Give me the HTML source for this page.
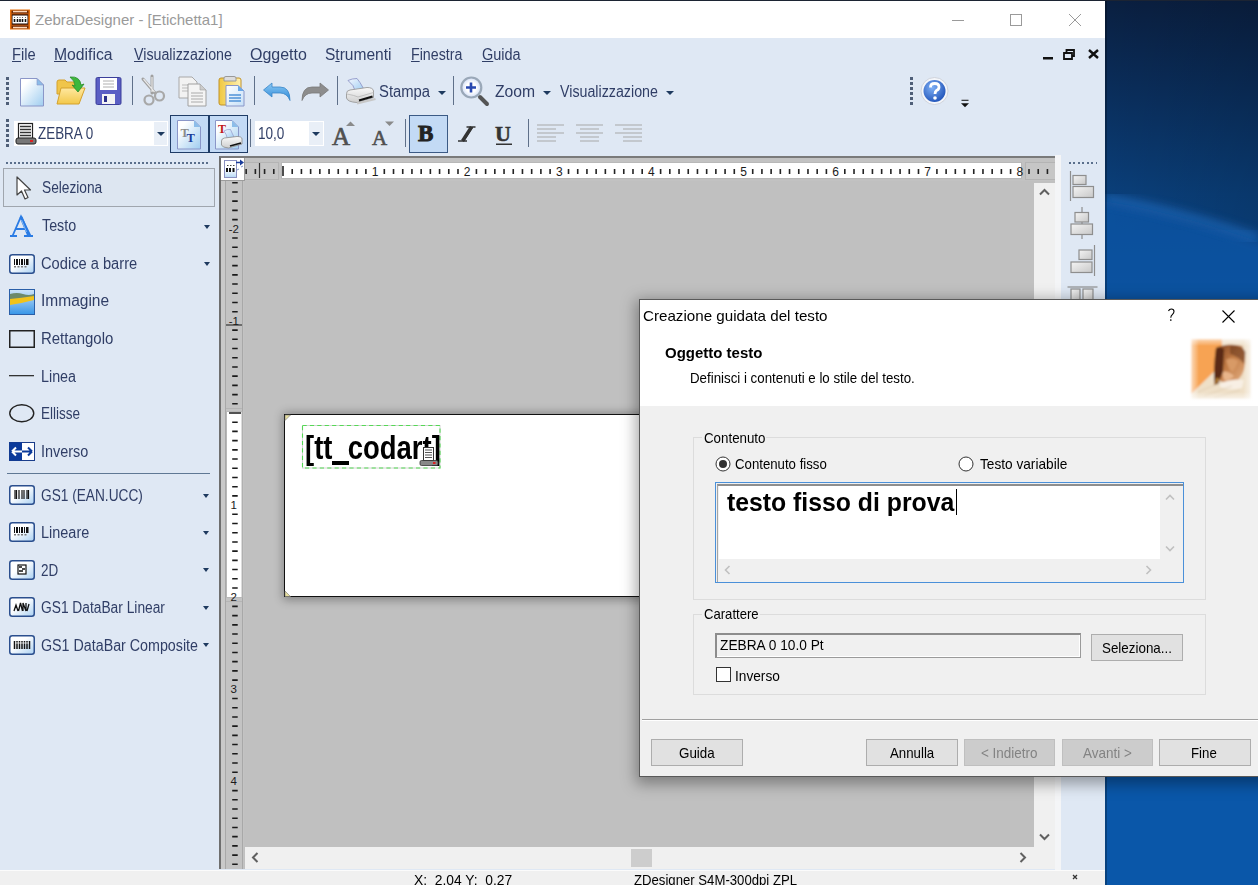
<!DOCTYPE html>
<html><head><meta charset="utf-8">
<style>
*{margin:0;padding:0;box-sizing:border-box}
html,body{width:1258px;height:885px;overflow:hidden;font-family:"Liberation Sans",sans-serif;font-size:12px;color:#000;background:#0a3d7a}
.a{position:absolute}
.t{position:absolute;white-space:nowrap;line-height:1}
svg{position:absolute;overflow:visible}
#desk{left:0;top:0;width:1258px;height:885px;background:#0a3d7a}
#win{left:0;top:0;width:1105px;height:885px;background:#dfe8f4;overflow:hidden}
#topline{left:0;top:0;width:1258px;height:1px;background:#1c2433}
#title{left:0;top:1px;width:1105px;height:37px;background:#fff}
.mn{color:#303e66;font-size:14px}
.mn u{text-decoration:underline;text-decoration-thickness:1px;text-underline-offset:1px}
.tb{color:#303e66;font-size:14px}
.grip{position:absolute;width:3px;background:repeating-linear-gradient(#4f5f78 0 2.6px,transparent 2.6px 5px)}
.sep{position:absolute;width:1px;background:#5f7089}
.lp{color:#303e66;font-size:14px}
.dl{font-size:14px;color:#000;transform:scaleX(0.955);transform-origin:0 0}
.dd{position:absolute;width:0;height:0;border-left:4px solid transparent;border-right:4px solid transparent;border-top:4px solid #1e3a5f}
</style></head><body>
<div class="a" id="desk"></div>
<svg class="a" style="left:1105px;top:0" width="153" height="885" viewBox="0 0 153 885">
  <defs>
    <linearGradient id="dv" x1="0" y1="0" x2="0" y2="1">
      <stop offset="0" stop-color="#0a1f40"/>
      <stop offset="0.1" stop-color="#0a2d5a"/>
      <stop offset="0.22" stop-color="#0a3f7a"/>
      <stop offset="0.4" stop-color="#0a4d94"/>
      <stop offset="0.7" stop-color="#0755a4"/>
      <stop offset="1" stop-color="#0757a6"/>
    </linearGradient>
    <linearGradient id="dh" x1="0" y1="0" x2="1" y2="0">
      <stop offset="0" stop-color="#000" stop-opacity="0"/>
      <stop offset="1" stop-color="#000" stop-opacity="0.12"/>
    </linearGradient>
    <filter id="blur"><feGaussianBlur stdDeviation="5"/></filter>
    <linearGradient id="dlow" x1="0" y1="0" x2="1" y2="0">
      <stop offset="0" stop-color="#0a64c0" stop-opacity="0"/>
      <stop offset="1" stop-color="#0a64c0" stop-opacity="0.5"/>
    </linearGradient>
  </defs>
  <rect width="153" height="885" fill="url(#dv)"/>
  <rect width="153" height="230" fill="url(#dh)"/>
  <path d="M-10 200Q60 208 163 245L163 895H-10Z" fill="#0a58ac" opacity="0.65" filter="url(#blur)"/>
  <path d="M0 198Q70 210 153 238" stroke="#2a78d0" stroke-width="8" fill="none" opacity="0.55" filter="url(#blur)"/>
  
  <rect x="0" y="0" width="2" height="885" fill="#000" opacity="0.25"/>
</svg>

<div class="a" id="win">
  <div class="a" id="title">
    <svg style="left:10px;top:8px" width="20" height="21" viewBox="0 0 20 21">
      <rect x="0" y="0.5" width="20" height="20" fill="#e8700c"/>
      <rect x="1.5" y="1.5" width="17" height="18" fill="#6e2a06"/>
      <rect x="3" y="1.8" width="14" height="1.5" fill="#ffd9bc"/>
      <rect x="3" y="17.8" width="14" height="1.5" fill="#ffd9bc"/>
      <rect x="1.5" y="4.5" width="17" height="1" fill="#e07020"/>
      <rect x="1.5" y="15.5" width="17" height="1" fill="#e07020"/>
      <rect x="2" y="5.5" width="16" height="10" fill="#1a0600"/>
      <rect x="2.5" y="6.5" width="15" height="8" fill="#fff"/>
      <path d="M4.5 8V9M7.5 8V9M10 8V9M12.5 8V9M15.5 8V9" stroke="#666" stroke-width="1"/>
      <path d="M4.5 10V13M7.5 10V13M10 10V13M12.5 10V13M15.5 10V13" stroke="#111" stroke-width="1.6"/>
    </svg>
    <div class="t" style="left:35px;top:11px;font-size:15px;color:#9a9a9a">ZebraDesigner - [Etichetta1]</div>
    <svg style="left:952px;top:18.6px" width="12" height="2"><rect width="12" height="1" fill="#9a9a9a"/></svg>
    <svg style="left:1010px;top:13px" width="12" height="12"><rect x="0.5" y="0.5" width="11" height="11" fill="none" stroke="#9a9a9a"/></svg>
    <svg style="left:1069px;top:13px" width="12" height="12"><path d="M0 0L12 12M12 0L0 12" stroke="#9a9a9a" stroke-width="1"/></svg>
  </div>

  <!-- menu -->
  <div class="t mn" style="left:12.08px;top:47.30px;font-size:16px;transform:scaleX(0.9167);transform-origin:0 0"><u>F</u>ile</div>
  <div class="t mn" style="left:54.02px;top:47.30px;font-size:16px;transform:scaleX(0.9831);transform-origin:0 0"><u>M</u>odifica</div>
  <div class="t mn" style="left:134.00px;top:47.30px;font-size:16px;transform:scaleX(0.8899);transform-origin:0 0"><u>V</u>isualizzazione</div>
  <div class="t mn" style="left:249.70px;top:47.30px;font-size:16px;transform:scaleX(0.9982);transform-origin:0 0"><u>O</u>ggetto</div>
  <div class="t mn" style="left:325.43px;top:47.30px;font-size:16px;transform:scaleX(0.9716);transform-origin:0 0">S<u>t</u>rumenti</div>
  <div class="t mn" style="left:410.51px;top:47.30px;font-size:16px;transform:scaleX(0.8877);transform-origin:0 0"><u>F</u>inestra</div>
  <div class="t mn" style="left:482.10px;top:47.30px;font-size:16px;transform:scaleX(0.9048);transform-origin:0 0"><u>G</u>uida</div>
  <!-- MDI buttons -->
  <svg style="left:1043px;top:57px" width="10" height="3"><rect width="10" height="2.5" fill="#111"/></svg>
  <svg style="left:1063px;top:49px" width="12" height="11" viewBox="0 0 12 11"><path d="M3.5 3V1h7.5v6H9M1 4h8v6H1z" fill="none" stroke="#111" stroke-width="1.8"/></svg>
  <svg style="left:1088px;top:49px" width="11" height="10" viewBox="0 0 11 10"><path d="M1 1L10 9M10 1L1 9" stroke="#111" stroke-width="2.4"/></svg>

  <!-- toolbar 1 -->
  <div class="grip" style="left:6px;top:76.5px;height:28px"></div>
  <svg style="left:20px;top:78px" width="25" height="29" viewBox="0 0 25 29">
    <defs><linearGradient id="gdoc" x1="0" y1="0" x2="1" y2="1"><stop offset="0.2" stop-color="#fff"/><stop offset="1" stop-color="#9fcdf0"/></linearGradient></defs>
    <path d="M0.5 0.5H17L23.5 7V28H0.5Z" fill="url(#gdoc)" stroke="#8a96c8"/>
    <path d="M17 0.5V7H23.5Z" fill="#8cbde9" stroke="#8a96c8" stroke-width="0.6"/>
  </svg>
  <svg style="left:56px;top:76px" width="30" height="30" viewBox="0 0 30 30">
    <defs><linearGradient id="gfold" x1="0" y1="0" x2="0" y2="1"><stop offset="0" stop-color="#ffe8a0"/><stop offset="1" stop-color="#f2c84a"/></linearGradient></defs>
    <path d="M1 6Q1 4 3 4H9L11 6H20V18H1Z" fill="#f0c54a" stroke="#d4a12c"/>
    <path d="M1 28L5 12H29L23 28Z" fill="url(#gfold)" stroke="#d4a12c"/>
    <path d="M14 1Q24 0 25 9L28 8L22 16L16 9L19 10Q19 5 14 1Z" fill="#3cb83c" stroke="#2a8a2a" stroke-width="0.8"/>
  </svg>
  <svg style="left:95px;top:77px" width="27" height="28" viewBox="0 0 27 28">
    <path d="M1 2Q1 0.5 2.5 0.5H24.5Q26 0.5 26 2V26Q26 27.5 24.5 27.5H2.5Q1 27.5 1 26Z" fill="#5b5fc4" stroke="#3c3f9a"/>
    <rect x="5" y="1" width="17" height="12" fill="#fff"/>
    <path d="M8 4H19M8 7H19M8 10H19" stroke="#b0b0b0" stroke-width="1"/>
    <rect x="7" y="17" width="13" height="10" fill="#f4f4f4"/>
    <rect x="9" y="19" width="3" height="6" fill="#2b2f8a"/>
  </svg>
  <div class="sep" style="left:132px;top:76px;height:29px"></div>
  <svg style="left:142px;top:76px" width="24" height="30" viewBox="0 0 24 30">
    <path d="M1 3L13 17M10 0L10 17" stroke="#a0a0a0" stroke-width="3" stroke-linecap="round"/>
    <path d="M1.5 3L12.5 16M10 1L10 16" stroke="#e8e8e8" stroke-width="1.2"/>
    <circle cx="7" cy="24" r="4.5" fill="none" stroke="#a8a8a8" stroke-width="2.2"/>
    <circle cx="17.5" cy="20" r="4.5" fill="none" stroke="#a8a8a8" stroke-width="2.2"/>
  </svg>
  <svg style="left:178px;top:76px" width="29" height="31" viewBox="0 0 29 31">
    <path d="M1 1H14L19 6V22H1Z" fill="#f2f2f2" stroke="#a8a8a8"/>
    <path d="M4 9H11M4 12H11M4 15H11" stroke="#bbb"/>
    <path d="M10 8H22L28 14V30H10Z" fill="#f4f4f4" stroke="#a0a0a0"/>
    <path d="M22 8V14H28" fill="#ccc" stroke="#a0a0a0" stroke-width="0.6"/>
    <path d="M13 17H25M13 20H25M13 23H25M13 26H25" stroke="#aaa" stroke-width="1.2"/>
  </svg>
  <svg style="left:218px;top:76px" width="27" height="31" viewBox="0 0 27 31">
    <defs><linearGradient id="gclip" x1="0" y1="0" x2="1" y2="0"><stop offset="0" stop-color="#f0c840"/><stop offset="1" stop-color="#fff0b0"/></linearGradient>
    <linearGradient id="gpg" x1="0" y1="0" x2="1" y2="1"><stop offset="0" stop-color="#fff"/><stop offset="1" stop-color="#c6e0f8"/></linearGradient></defs>
    <rect x="1" y="2" width="22" height="27" rx="2" fill="url(#gclip)" stroke="#c0922a"/>
    <path d="M6 5V2Q6 0.5 8 0.5H16Q18 0.5 18 2V5Z" fill="#ddd" stroke="#999"/>
    <path d="M8 9.5H20L26 15V30H8Z" fill="url(#gpg)" stroke="#8a96c8"/>
    <path d="M20 9.5V15H26Z" fill="#6aa8e8"/>
    <path d="M11 19H23M11 22H23M11 25H23" stroke="#4f92d8" stroke-width="1.3"/>
  </svg>
  <div class="sep" style="left:254px;top:76px;height:29px"></div>
  <svg style="left:263px;top:82px" width="28" height="19" viewBox="0 0 28 19">
    <defs><linearGradient id="gundo" x1="0" y1="0" x2="0" y2="1"><stop offset="0" stop-color="#8ccaf5"/><stop offset="1" stop-color="#2a86d6"/></linearGradient></defs>
    <path d="M0.5 8L9 1V5H17Q27 5 27 18.5Q24 11 17 11H9V15Z" fill="url(#gundo)" stroke="#3a86c8" stroke-width="0.8"/>
  </svg>
  <svg style="left:301px;top:82px" width="28" height="19" viewBox="0 0 28 19">
    <path d="M27.5 8L19 1V5H11Q1 5 1 18.5Q4 11 11 11H19V15Z" fill="#8d8d8d" stroke="#7a7a7a" stroke-width="0.8"/>
  </svg>
  <div class="sep" style="left:337px;top:76px;height:29px"></div>
  <svg style="left:345px;top:76px" width="31" height="29" viewBox="0 0 31 29">
    <defs><linearGradient id="gpap2" x1="0" y1="0" x2="1" y2="1"><stop offset="0" stop-color="#f4f8ff"/><stop offset="1" stop-color="#9ccbf2"/></linearGradient>
    <linearGradient id="gprb" x1="0" y1="0" x2="0" y2="1"><stop offset="0" stop-color="#fafafa"/><stop offset="1" stop-color="#cfcfcf"/></linearGradient></defs>
    <path d="M3 4.5Q7 2.5 12 2.5Q15 6 18.5 12.5L10.5 15.5Q9 9 3 4.5Z" fill="url(#gpap2)" stroke="#9096c8" stroke-width="0.9"/>
    <path d="M1.5 17.5Q1.5 14.5 5 14L22 11.5Q28 11.5 28.5 15V21.5L12 26.5Q2.5 26 1.5 22Z" fill="url(#gprb)" stroke="#9a9a9a" stroke-width="0.9"/>
    <path d="M2 18Q10 19.5 13 21L28.5 16.5" fill="none" stroke="#b8b8b8" stroke-width="0.8"/>
    <path d="M14 24.5L27.5 20.5" stroke="#111" stroke-width="2.2"/>
    <path d="M12 27.5L30.5 23" stroke="#c8c8c8" stroke-width="2"/>
  </svg>
  <div class="t tb" style="left:379.07px;top:83.60px;font-size:16px;transform:scaleX(0.9259);transform-origin:0 0">Stampa</div>
  <div class="dd" style="left:438px;top:91px"></div>
  <div class="sep" style="left:453px;top:76px;height:29px"></div>
  <svg style="left:459px;top:76px" width="31" height="31" viewBox="0 0 31 31">
    <defs><radialGradient id="glens"><stop offset="0.5" stop-color="#fff"/><stop offset="1" stop-color="#cfdcf5"/></radialGradient></defs>
    <path d="M21 21L28 28" stroke="#555" stroke-width="4" stroke-linecap="round"/>
    <circle cx="12.3" cy="11.5" r="10" fill="url(#glens)" stroke="#9aa8b8" stroke-width="2.2"/>
    <path d="M7 11.5H17M12 6.5V16.5" stroke="#2848b0" stroke-width="2.6"/>
  </svg>
  <div class="t tb" style="left:494.80px;top:83.60px;font-size:16px;transform:scaleX(0.9800);transform-origin:0 0">Zoom</div>
  <div class="dd" style="left:543px;top:91px"></div>
  <div class="t tb" style="left:560.00px;top:83.60px;font-size:16px;transform:scaleX(0.8899);transform-origin:0 0">Visualizzazione</div>
  <div class="dd" style="left:666px;top:91px"></div>
  <div class="grip" style="left:910px;top:76.5px;height:28px"></div>
  <svg style="left:920px;top:77px" width="30" height="29" viewBox="0 0 30 29">
    <defs><radialGradient id="ghelp" cx="0.4" cy="0.35" r="0.7"><stop offset="0" stop-color="#7fb0f5"/><stop offset="1" stop-color="#1f52b8"/></radialGradient></defs>
    <circle cx="14.5" cy="14" r="13.5" fill="#f4f6fa" stroke="#c8ccd4" stroke-width="0.8"/>
    <circle cx="14.5" cy="14" r="11" fill="url(#ghelp)"/>
    <path d="M10.5 10.5Q10.5 6.5 14.8 6.5Q19 6.5 19 10Q19 12.5 16.5 13.5Q15 14.5 15 17" fill="none" stroke="#fff" stroke-width="2.8"/>
    <circle cx="15" cy="21" r="1.8" fill="#fff"/>
  </svg>
  <svg style="left:961px;top:99px" width="8" height="9" viewBox="0 0 8 9"><path d="M0.5 1.3H7.5" stroke="#222" stroke-width="1.1"/><path d="M0 4.2H8L4 8.3Z" fill="#111"/></svg>

  <!-- toolbar 2 -->
  <div class="grip" style="left:6px;top:118.5px;height:28px"></div>
  <div class="a" style="left:14px;top:121px;width:154px;height:25px;background:#fff"></div>
  <div class="a" style="left:154px;top:122px;width:13px;height:23px;background:#e9eff7"></div>
  <div class="dd" style="left:157px;top:132px"></div>
  <svg style="left:15px;top:123px" width="22" height="22" viewBox="0 0 22 22">
    <rect x="3.5" y="0.5" width="14" height="15" fill="#fff" stroke="#222" stroke-width="1.2"/>
    <path d="M5 3.5H16M5 6.5H16M5 9.5H16M5 12.5H16" stroke="#333" stroke-width="1.3"/>
    <path d="M1 17Q1 15 3 15H19Q21 15 21 17V19Q21 21 19 21H3Q1 21 1 19Z" fill="#777" stroke="#222" stroke-width="1"/>
    <rect x="15" y="17" width="3" height="2" fill="#d22"/>
  </svg>
  <div class="t tb" style="left:37.80px;top:125.90px;font-size:16px;transform:scaleX(0.8385);transform-origin:0 0">ZEBRA 0</div>
  <div class="a" style="left:170px;top:115px;width:78px;height:38px;background:#c3daf5;border:1.5px solid #1f3c66"></div>
  <div class="a" style="left:207.5px;top:115px;width:2px;height:38px;background:#1f3c66"></div>
  <svg style="left:177px;top:120px" width="25" height="30" viewBox="0 0 25 30">
    <path d="M0.5 0.5H17L23.5 7V29H0.5Z" fill="url(#gdoc)" stroke="#8a96c8"/>
    <path d="M17 0.5V7H23.5Z" fill="#8cbde9"/>
    <text x="3.5" y="17" font-family="Liberation Serif" font-size="12.5" font-weight="bold" fill="#8a8a8a">T</text>
    <text x="9.5" y="21.5" font-family="Liberation Serif" font-size="12.5" font-weight="bold" fill="#1a3c9a">T</text>
  </svg>
  <svg style="left:215px;top:120px" width="30" height="30" viewBox="0 0 30 30">
    <path d="M0.5 0.5H17L23.5 7V29H0.5Z" fill="url(#gdoc)" stroke="#8a96c8"/>
    <path d="M17 0.5V7H23.5Z" fill="#8cbde9"/>
    <text x="3" y="13" font-family="Liberation Serif" font-size="12" font-weight="bold" fill="#c01818">T</text>
    <path d="M9 11Q12 9 15.5 9.5Q17 13 19 17L12.5 19Q11.5 14 9 11Z" fill="url(#gpap2)" stroke="#9096c8" stroke-width="0.7"/>
    <path d="M6.5 21Q6.5 18.5 9.5 18L22 16.5Q27 16.5 27 19V24L13.5 28Q7 27.5 6.5 25Z" fill="url(#gprb)" stroke="#8a8a8a" stroke-width="0.8"/>
    <path d="M15 26L26 23" stroke="#111" stroke-width="1.8"/>
  </svg>
  <div class="sep" style="left:250px;top:119px;height:28px"></div>
  <div class="a" style="left:255px;top:121px;width:69px;height:25px;background:#fff"></div>
  <div class="a" style="left:309px;top:122px;width:14px;height:23px;background:#e9eff7"></div>
  <div class="dd" style="left:312px;top:132px"></div>
  <div class="t tb" style="left:257.75px;top:125.90px;font-size:16px;transform:scaleX(0.8467);transform-origin:0 0">10,0</div>
  <svg style="left:332px;top:121px" width="25" height="25" viewBox="0 0 25 25">
    <text x="0" y="24" font-family="Liberation Serif" font-size="25" fill="#505050" stroke="#505050" stroke-width="0.7">A</text>
    <path d="M14 5L18.5 0.5L23 5Z" fill="#8a8a8a"/>
  </svg>
  <svg style="left:372px;top:121px" width="22" height="25" viewBox="0 0 22 25">
    <text x="0" y="24" font-family="Liberation Serif" font-size="21" fill="#505050" stroke="#505050" stroke-width="0.6">A</text>
    <path d="M13 0.5H22L17.5 5Z" fill="#8a8a8a"/>
  </svg>
  <div class="sep" style="left:405px;top:119px;height:28px"></div>
  <div class="a" style="left:409px;top:115px;width:39px;height:38px;background:#c3daf5;border:1px solid #3b5a85"></div>
  <svg style="left:418px;top:125px" width="20" height="18" viewBox="0 0 20 18">
    <text x="0" y="16.3" font-family="Liberation Serif" font-size="23" font-weight="bold" fill="#222" stroke="#222" stroke-width="0.9">B</text>
  </svg>
  <svg style="left:457px;top:125px" width="20" height="18" viewBox="0 0 20 18">
    <path d="M9.5 2H18.5M1 16H10M15.5 2L6.5 16" fill="none" stroke="#333" stroke-width="1.6"/><path d="M14.5 2L5.5 16" stroke="#333" stroke-width="3.4"/>
  </svg>
  <svg style="left:495px;top:124px" width="20" height="22" viewBox="0 0 20 22">
    <text x="0" y="16.5" font-family="Liberation Serif" font-size="22" font-weight="bold" fill="#333" stroke="#333" stroke-width="0.5">U</text>
    <rect x="1" y="19.5" width="16" height="1.5" fill="#333"/>
  </svg>
  <div class="sep" style="left:528px;top:119px;height:28px"></div>
  <svg style="left:537px;top:124px" width="106" height="20" viewBox="0 0 106 20">
    <g stroke="#a8a8a8" stroke-width="1.1">
      <path d="M0 1H27M0 5H19M0 9H27M0 13H19M0 17H19"/>
      <path d="M39 1H66M43 5H62M39 9H66M43 13H62M43 17H62"/>
      <path d="M78 1H105M86 5H105M78 9H105M86 13H105M86 17H105"/>
    </g>
  </svg>

  <!-- left panel -->
  <svg style="left:0;top:0" width="0" height="0"><defs><linearGradient id="gbc" x1="0" y1="0" x2="1" y2="1"><stop offset="0.4" stop-color="#fff"/><stop offset="1" stop-color="#a9d0f2"/></linearGradient></defs></svg>
  <div class="a" style="left:6px;top:162px;width:204px;height:2px;background:repeating-linear-gradient(90deg,#5a6f8c 0 2px,transparent 2px 4px)"></div>
  <div class="a" style="left:3px;top:168px;width:212px;height:39px;border:1px solid #a0a6ae;background:#dde6f1"></div>
  <svg style="left:16px;top:176px" width="16" height="25" viewBox="0 0 16 25">
    <path d="M1 1V19L5.5 15L9 23L12 21.5L8.5 14H14.5Z" fill="#fff" stroke="#444" stroke-width="1.2" stroke-linejoin="round"/>
  </svg>
  <div class="t lp" style="left:42.14px;top:179.60px;font-size:16px;transform:scaleX(0.8571);transform-origin:0 0">Seleziona</div>
  <svg style="left:9px;top:215px" width="25" height="22" viewBox="0 0 25 22">
    <path d="M1 21H8M15 21H24M3.5 21L12 1.5L21.5 21M7 14H17" fill="none" stroke="#2a7be4" stroke-width="1.8"/>
    <path d="M12 2L19.5 20" stroke="#2a7be4" stroke-width="3"/>
    <path d="M12.5 5L17.5 17" stroke="#9cc8f4" stroke-width="0.8"/>
  </svg>
  <div class="t lp" style="left:42.00px;top:218.00px;font-size:16px;transform:scaleX(0.8947);transform-origin:0 0">Testo</div>
  <div class="dd" style="left:203.5px;top:224.5px;border-left-width:3.5px;border-right-width:3.5px"></div>
  <svg style="left:9px;top:254px" width="26" height="20" viewBox="0 0 26 20">
    <defs></defs>
    <rect x="0.75" y="0.75" width="24.5" height="18.5" rx="2.5" fill="url(#gbc)" stroke="#2b4f8e" stroke-width="1.5"/>
    <g fill="#111"><rect x="5" y="5" width="1" height="6"/><rect x="7" y="5" width="2" height="6"/><rect x="10" y="5" width="1" height="6"/><rect x="12" y="5" width="2" height="6"/><rect x="15" y="5" width="1" height="6"/><rect x="17" y="5" width="2.5" height="6"/></g><g fill="#777"><rect x="5" y="12" width="2" height="1.5"/><rect x="8.5" y="12" width="2" height="1.5"/><rect x="12" y="12" width="2" height="1.5"/><rect x="15.5" y="12" width="2" height="1.5"/></g>
  </svg>

  <div class="t lp" style="left:40.98px;top:255.80px;font-size:16px;transform:scaleX(0.9165);transform-origin:0 0">Codice a barre</div>
  <div class="dd" style="left:203.5px;top:261.5px;border-left-width:3.5px;border-right-width:3.5px"></div>
  <svg style="left:9px;top:289px" width="26" height="26" viewBox="0 0 26 26">
    <defs><linearGradient id="gimg" x1="0" y1="0" x2="0" y2="1"><stop offset="0" stop-color="#cfe4f7"/><stop offset="1" stop-color="#3796e8"/></linearGradient></defs>
    <rect x="0.5" y="0.5" width="25" height="25" fill="url(#gimg)" stroke="#2a5fa8"/>
    <path d="M1 5Q8 3 14 5Q20 7 25 5V8Q16 11 1 13Z" fill="#6d8a6a"/>
    <path d="M1 10Q12 9 25 7V11Q14 14 1 16Z" fill="#f2c31a"/>
  </svg>
  <div class="t lp" style="left:40.93px;top:293.40px;font-size:16px;transform:scaleX(0.9696);transform-origin:0 0">Immagine</div>
  <svg style="left:9px;top:330px" width="26" height="18" viewBox="0 0 26 18"><rect x="0.75" y="0.75" width="24.5" height="16.5" fill="none" stroke="#222" stroke-width="1.5"/></svg>
  <div class="t lp" style="left:41.07px;top:331.00px;font-size:16px;transform:scaleX(0.9342);transform-origin:0 0">Rettangolo</div>
  <svg style="left:9px;top:375px" width="26" height="2"><rect width="25" height="1.3" fill="#333"/></svg>
  <div class="t lp" style="left:41.11px;top:368.60px;font-size:16px;transform:scaleX(0.8947);transform-origin:0 0">Linea</div>
  <svg style="left:9px;top:404px" width="26" height="19" viewBox="0 0 26 19"><ellipse cx="12.75" cy="9.25" rx="12" ry="8.5" fill="none" stroke="#222" stroke-width="1.4"/></svg>
  <div class="t lp" style="left:41.16px;top:406.20px;font-size:16px;transform:scaleX(0.8444);transform-origin:0 0">Ellisse</div>
  <svg style="left:9px;top:442px" width="26" height="19" viewBox="0 0 26 19">
    <rect x="0.5" y="0.5" width="25" height="18" fill="#fff" stroke="#1a3d8a"/>
    <rect x="0.5" y="0.5" width="12.5" height="18" fill="#0b3a9a"/>
    <path d="M3 9.5H23M3 9.5L7 5.5M3 9.5L7 13.5M23 9.5L19 5.5M23 9.5L19 13.5" stroke="#fff" stroke-width="2"/>
    <path d="M13 9.5H23M23 9.5L19 5.5M23 9.5L19 13.5" stroke="#0b3a9a" stroke-width="2"/>
  </svg>
  <div class="t lp" style="left:41.10px;top:443.80px;font-size:16px;transform:scaleX(0.9020);transform-origin:0 0">Inverso</div>
  <div class="a" style="left:7px;top:473px;width:203px;height:1px;background:#5f7894"></div>
  <svg style="left:9px;top:485px" width="26" height="20" viewBox="0 0 26 20">
    <defs></defs>
    <rect x="0.75" y="0.75" width="24.5" height="18.5" rx="2.5" fill="url(#gbc)" stroke="#2b4f8e" stroke-width="1.5"/>
    <path d="M6 5V14M7.5 5V14M10 5V14M13 5V14M15 5V14M18 5V14M19.5 5V14" stroke="#111" stroke-width="1.2"/>
  </svg>

  <div class="t lp" style="left:41.15px;top:487.50px;font-size:16px;transform:scaleX(0.8547);transform-origin:0 0">GS1 (EAN.UCC)</div>
  <div class="dd" style="left:202.5px;top:493.5px;border-left-width:3.5px;border-right-width:3.5px"></div>
  <svg style="left:9px;top:522px" width="26" height="20" viewBox="0 0 26 20">
    <defs></defs>
    <rect x="0.75" y="0.75" width="24.5" height="18.5" rx="2.5" fill="url(#gbc)" stroke="#2b4f8e" stroke-width="1.5"/>
    <g fill="#111"><rect x="5" y="5" width="1" height="6"/><rect x="7" y="5" width="2" height="6"/><rect x="10" y="5" width="1" height="6"/><rect x="12" y="5" width="2" height="6"/><rect x="15" y="5" width="1" height="6"/><rect x="17" y="5" width="2.5" height="6"/></g><g fill="#777"><rect x="5" y="12" width="2" height="1.5"/><rect x="8.5" y="12" width="2" height="1.5"/><rect x="12" y="12" width="2" height="1.5"/><rect x="15.5" y="12" width="2" height="1.5"/></g>
  </svg>

  <div class="t lp" style="left:41.10px;top:525.00px;font-size:16px;transform:scaleX(0.9038);transform-origin:0 0">Lineare</div>
  <div class="dd" style="left:202.5px;top:530.5px;border-left-width:3.5px;border-right-width:3.5px"></div>
  <svg style="left:9px;top:560px" width="26" height="20" viewBox="0 0 26 20">
    <defs></defs>
    <rect x="0.75" y="0.75" width="24.5" height="18.5" rx="2.5" fill="url(#gbc)" stroke="#2b4f8e" stroke-width="1.5"/>
    <rect x="9" y="5" width="8" height="9" fill="#fff" stroke="#111" stroke-width="1.2"/><path d="M10 7H13M13 9H16M10 11H14" stroke="#111" stroke-width="1.4"/>
  </svg>

  <div class="t lp" style="left:41.16px;top:562.70px;font-size:16px;transform:scaleX(0.8421);transform-origin:0 0">2D</div>
  <div class="dd" style="left:202.5px;top:567.5px;border-left-width:3.5px;border-right-width:3.5px"></div>
  <svg style="left:9px;top:597px" width="26" height="20" viewBox="0 0 26 20">
    <defs></defs>
    <rect x="0.75" y="0.75" width="24.5" height="18.5" rx="2.5" fill="url(#gbc)" stroke="#2b4f8e" stroke-width="1.5"/>
    <path d="M5 14L7 8L9 14M9.5 14L11.5 6L13.5 14M14 14V6L17 14V6M18 14L20 7" fill="none" stroke="#111" stroke-width="1.3"/>
  </svg>

  <div class="t lp" style="left:41.14px;top:600.30px;font-size:16px;transform:scaleX(0.8601);transform-origin:0 0">GS1 DataBar Linear</div>
  <div class="dd" style="left:202.5px;top:605.5px;border-left-width:3.5px;border-right-width:3.5px"></div>
  <svg style="left:9px;top:635px" width="26" height="20" viewBox="0 0 26 20">
    <defs></defs>
    <rect x="0.75" y="0.75" width="24.5" height="18.5" rx="2.5" fill="url(#gbc)" stroke="#2b4f8e" stroke-width="1.5"/>
    <path d="M5.5 6V14M8 6V14M10.5 6V14M13 6V14M15.5 6V14M18 6V14M20.5 6V14" stroke="#111" stroke-width="1.5"/><path d="M6 8H20" stroke="#fff" stroke-width="0.8"/>
  </svg>

  <div class="t lp" style="left:41.11px;top:638.00px;font-size:16px;transform:scaleX(0.8914);transform-origin:0 0">GS1 DataBar Composite</div>
  <div class="dd" style="left:202.5px;top:642.5px;border-left-width:3.5px;border-right-width:3.5px"></div>

  <!-- canvas -->
  <div class="a" style="left:219px;top:156px;width:836px;height:713px;background:#c0c0c0;border-left:2px solid #6e6e6e;border-top:2px solid #7a7a7a"></div>
  <svg id="hruler" style="left:244px;top:158px" width="811" height="23" viewBox="0 0 811 23">
<rect x="0" y="0" width="811" height="23" fill="#c2c2c2"/>
<rect x="0.5" y="4.5" width="34" height="17" fill="#c6c6c6" stroke="#b4b4b4"/>
<rect x="37.5" y="4.5" width="740" height="16" fill="#fff" stroke="#b8b8b8"/>
<rect x="781.5" y="4.5" width="30" height="17" fill="#c6c6c6" stroke="#b4b4b4"/>
<path d="M2.16 11V16 M11.37 11V16 M20.58 11V16 M29.79 11V16 M39.00 8V18 M48.21 11V16 M57.42 11V16 M66.63 11V16 M75.84 11V16 M85.05 11V16 M94.26 11V16 M103.47 11V16 M112.68 11V16 M121.89 11V16 M140.31 11V16 M149.52 11V16 M158.73 11V16 M167.94 11V16 M177.15 11V16 M186.36 11V16 M195.57 11V16 M204.78 11V16 M213.99 11V16 M232.41 11V16 M241.62 11V16 M250.83 11V16 M260.04 11V16 M269.25 11V16 M278.46 11V16 M287.67 11V16 M296.88 11V16 M306.09 11V16 M324.51 11V16 M333.72 11V16 M342.93 11V16 M352.14 11V16 M361.35 11V16 M370.56 11V16 M379.77 11V16 M388.98 11V16 M398.19 11V16 M416.61 11V16 M425.82 11V16 M435.03 11V16 M444.24 11V16 M453.45 11V16 M462.66 11V16 M471.87 11V16 M481.08 11V16 M490.29 11V16 M508.71 11V16 M517.92 11V16 M527.13 11V16 M536.34 11V16 M545.55 11V16 M554.76 11V16 M563.97 11V16 M573.18 11V16 M582.39 11V16 M600.81 11V16 M610.02 11V16 M619.23 11V16 M628.44 11V16 M637.65 11V16 M646.86 11V16 M656.07 11V16 M665.28 11V16 M674.49 11V16 M692.91 11V16 M702.12 11V16 M711.33 11V16 M720.54 11V16 M729.75 11V16 M738.96 11V16 M748.17 11V16 M757.38 11V16 M766.59 11V16 M785.01 11V16 M794.22 11V16 M803.43 11V16" stroke="#222" stroke-width="1.6"/>
<path d="M15.5 5V20" stroke="#333" stroke-width="1.2"/>
<text x="131.10" y="17.5" font-family="Liberation Sans" font-size="12" text-anchor="middle" fill="#1a1a1a">1</text>
<text x="223.20" y="17.5" font-family="Liberation Sans" font-size="12" text-anchor="middle" fill="#1a1a1a">2</text>
<text x="315.30" y="17.5" font-family="Liberation Sans" font-size="12" text-anchor="middle" fill="#1a1a1a">3</text>
<text x="407.40" y="17.5" font-family="Liberation Sans" font-size="12" text-anchor="middle" fill="#1a1a1a">4</text>
<text x="499.50" y="17.5" font-family="Liberation Sans" font-size="12" text-anchor="middle" fill="#1a1a1a">5</text>
<text x="591.60" y="17.5" font-family="Liberation Sans" font-size="12" text-anchor="middle" fill="#1a1a1a">6</text>
<text x="683.70" y="17.5" font-family="Liberation Sans" font-size="12" text-anchor="middle" fill="#1a1a1a">7</text>
<text x="775.80" y="17.5" font-family="Liberation Sans" font-size="12" text-anchor="middle" fill="#1a1a1a">8</text>
</svg>
  <svg id="vruler" style="left:221px;top:181px" width="23" height="688" viewBox="0 0 23 688">
<rect x="0" y="0" width="23" height="688" fill="#c3c3c3"/>
<rect x="0" y="0" width="4.5" height="688" fill="#c9c9c9"/>
<path d="M4.5 0V688" stroke="#a8a8a8" stroke-width="1"/>
<path d="M21.5 0V688" stroke="#a8a8a8" stroke-width="1"/>
<rect x="5.5" y="230.5" width="15.5" height="186" fill="#fff" stroke="#b8b8b8"/>
<path d="M5 227.5H21M5 420.5H21" stroke="#b4b4b4" stroke-width="1"/>
<path d="M11.2 1.75H16.7 M11.2 10.96H16.7 M11.2 20.17H16.7 M11.2 29.38H16.7 M11.2 38.59H16.7 M11.2 57.01H16.7 M11.2 66.22H16.7 M11.2 75.43H16.7 M11.2 84.64H16.7 M11.2 93.85H16.7 M11.2 103.06H16.7 M11.2 112.27H16.7 M11.2 121.48H16.7 M11.2 130.69H16.7 M11.2 149.11H16.7 M11.2 158.32H16.7 M11.2 167.53H16.7 M11.2 176.74H16.7 M11.2 185.95H16.7 M11.2 195.16H16.7 M11.2 204.37H16.7 M11.2 213.58H16.7 M11.2 222.79H16.7 M8 232.00H20 M11.2 241.21H16.7 M11.2 250.42H16.7 M11.2 259.63H16.7 M11.2 268.84H16.7 M11.2 278.05H16.7 M11.2 287.26H16.7 M11.2 296.47H16.7 M11.2 305.68H16.7 M11.2 314.89H16.7 M11.2 333.31H16.7 M11.2 342.52H16.7 M11.2 351.73H16.7 M11.2 360.94H16.7 M11.2 370.15H16.7 M11.2 379.36H16.7 M11.2 388.57H16.7 M11.2 397.78H16.7 M11.2 406.99H16.7 M11.2 425.41H16.7 M11.2 434.62H16.7 M11.2 443.83H16.7 M11.2 453.04H16.7 M11.2 462.25H16.7 M11.2 471.46H16.7 M11.2 480.67H16.7 M11.2 489.88H16.7 M11.2 499.09H16.7 M11.2 517.51H16.7 M11.2 526.72H16.7 M11.2 535.93H16.7 M11.2 545.14H16.7 M11.2 554.35H16.7 M11.2 563.56H16.7 M11.2 572.77H16.7 M11.2 581.98H16.7 M11.2 591.19H16.7 M11.2 609.61H16.7 M11.2 618.82H16.7 M11.2 628.03H16.7 M11.2 637.24H16.7 M11.2 646.45H16.7 M11.2 655.66H16.7 M11.2 664.87H16.7 M11.2 674.08H16.7 M11.2 683.29H16.7" stroke="#1a1a1a" stroke-width="1.6"/>
<path d="M5 144H21" stroke="#333" stroke-width="1.2"/>
<text x="12.8" y="51.80" font-family="Liberation Sans" font-size="11.5" text-anchor="middle" fill="#1a1a1a">-2</text>
<text x="12.8" y="143.90" font-family="Liberation Sans" font-size="11.5" text-anchor="middle" fill="#1a1a1a">-1</text>
<text x="12.8" y="328.10" font-family="Liberation Sans" font-size="11.5" text-anchor="middle" fill="#1a1a1a">1</text>
<text x="12.8" y="420.20" font-family="Liberation Sans" font-size="11.5" text-anchor="middle" fill="#1a1a1a">2</text>
<text x="12.8" y="512.30" font-family="Liberation Sans" font-size="11.5" text-anchor="middle" fill="#1a1a1a">3</text>
<text x="12.8" y="604.40" font-family="Liberation Sans" font-size="11.5" text-anchor="middle" fill="#1a1a1a">4</text>
</svg>
  <div class="a" style="left:221px;top:158px;width:23.5px;height:23px;background:#fff;border-right:1px solid #9c9c9c;border-bottom:1px solid #9c9c9c"></div>
  <svg style="left:223px;top:159px" width="22" height="21" viewBox="0 0 22 21">
    <defs><linearGradient id="gcorn" x1="0" y1="0" x2="0" y2="1"><stop offset="0.5" stop-color="#fff"/><stop offset="1" stop-color="#b5d8f5"/></linearGradient></defs>
    <rect x="1.5" y="1.5" width="12" height="17" fill="url(#gcorn)" stroke="#8a90c0"/>
    <path d="M4 6.5H5.5M7 6.5H8.5M10 6.5H11.5" stroke="#444" stroke-width="1"/>
    <path d="M4 9V13M7 9V13M10.5 9V13" stroke="#111" stroke-width="2"/>
    <path d="M13 3.5H18" stroke="#1a3c9a" stroke-width="1.5"/><path d="M17 0.5L21 3.5L17 6.5Z" fill="#1a3c9a"/>
    <path d="M14 11L16 10M18 8L20 7" stroke="#5a78b8" stroke-width="0.8"/>
  </svg>
  <!-- label -->
  <div class="a" style="left:284px;top:414px;width:420px;height:183px;background:#fff;border:1px solid #111;box-shadow:1px 1px 9px 2px rgba(0,0,0,0.32)"></div>
  <svg style="left:285px;top:415px" width="6" height="6"><path d="M0 0H5.5L0 5.5Z" fill="#e8e0a0" stroke="#777" stroke-width="0.6"/></svg>
  <svg style="left:285px;top:591px" width="6" height="6"><path d="M0 0V5.5H5.5Z" fill="#e8e0a0" stroke="#777" stroke-width="0.6"/></svg>
  <svg style="left:302px;top:425px" width="139" height="44" viewBox="0 0 139 44"><rect x="0.5" y="0.5" width="137.5" height="42.5" fill="none" stroke="#d4d4d4" stroke-width="1"/><rect x="0.5" y="0.5" width="137.5" height="42.5" fill="none" stroke="#55d855" stroke-width="1.1" stroke-dasharray="4.2 3.2"/></svg>
  <div class="t" style="left:304.5px;top:432px;font-size:32.5px;font-weight:bold;transform:scaleX(0.845);transform-origin:0 0;color:#000">[tt_codart]</div>
  <div class="a" style="left:332px;top:461px;width:17px;height:3.5px;background:#000"></div>
  <svg style="left:419px;top:447px" width="20" height="20" viewBox="0 0 20 20">
    <rect x="4.5" y="0.5" width="10" height="13" fill="#fff" stroke="#333" stroke-width="1"/>
    <path d="M6 3H13M6 5.5H13M6 8H13M6 10.5H13" stroke="#555" stroke-width="1.2"/>
    <path d="M1 15Q1 13.5 2.5 13.5H17.5Q19 13.5 19 15V17Q19 18.5 17.5 18.5H2.5Q1 18.5 1 17Z" fill="#888" stroke="#333" stroke-width="0.8"/>
    <rect x="14" y="15" width="2.5" height="2" fill="#d22"/>
  </svg>
  <!-- scrollbars -->
  <div class="a" style="left:1034px;top:183px;width:21px;height:664px;background:#f0f0f0"></div>
  <svg style="left:1039px;top:188px" width="11" height="8" viewBox="0 0 11 8"><path d="M1 6.5L5.5 2L10 6.5" fill="none" stroke="#606060" stroke-width="2"/></svg>
  <svg style="left:1039px;top:833px" width="11" height="8" viewBox="0 0 11 8"><path d="M1 1.5L5.5 6L10 1.5" fill="none" stroke="#606060" stroke-width="2"/></svg>
  <div class="a" style="left:245px;top:847px;width:810px;height:22px;background:#f0f0f0"></div>
  <div class="a" style="left:631px;top:849px;width:21px;height:18px;background:#cdcdcd"></div>
  <svg style="left:251px;top:852px" width="8" height="11" viewBox="0 0 8 11"><path d="M6.5 1L2 5.5L6.5 10" fill="none" stroke="#606060" stroke-width="2"/></svg>
  <svg style="left:1019px;top:852px" width="8" height="11" viewBox="0 0 8 11"><path d="M1.5 1L6 5.5L1.5 10" fill="none" stroke="#606060" stroke-width="2"/></svg>
  <div class="a" style="left:1055px;top:155px;width:6px;height:715px;background:#f4f5f7"></div>
  <!-- right toolbar -->
  <div class="a" style="left:1069px;top:162px;width:28px;height:2px;background:repeating-linear-gradient(90deg,#5a6f8c 0 2px,transparent 2px 4.5px)"></div>
  <svg style="left:1066px;top:170px" width="34" height="130" viewBox="0 0 34 130">
    <defs><linearGradient id="gal" x1="0" y1="0" x2="1" y2="1"><stop offset="0" stop-color="#f4f4f4"/><stop offset="1" stop-color="#c8c8c8"/></linearGradient></defs>
    <g stroke="#8e8e8e" stroke-width="1.2" fill="url(#gal)">
      <path d="M4.5 1V31" fill="none"/>
      <rect x="7" y="5.5" width="13" height="9"/>
      <rect x="7" y="16.5" width="20.5" height="11"/>
      <path d="M16 37V69" fill="none"/>
      <rect x="9" y="42.5" width="13.5" height="9.5"/>
      <rect x="5" y="54" width="21.5" height="10.5"/>
      <path d="M28.5 75V106" fill="none"/>
      <rect x="13" y="80" width="13" height="9.5"/>
      <rect x="5" y="92" width="21" height="10.5"/>
      <path d="M1.5 117H31.5" fill="none"/>
      <rect x="5" y="119" width="9" height="14"/>
      <rect x="17" y="119" width="10" height="14"/>
    </g>
  </svg>

  <!-- status -->
  <div class="a" style="left:0;top:870px;width:1105px;height:15px;background:#f0f0f0;border-top:1px solid #fbfbfb"></div>
  <div class="t" style="left:413.58px;top:871.60px;font-size:15px;color:#000;transform:scaleX(0.9229);transform-origin:0 0">X:&nbsp; 2.04 Y:&nbsp; 0.27</div>
  <div class="t" style="left:633.60px;top:871.60px;font-size:15px;color:#000;transform:scaleX(0.8771);transform-origin:0 0">ZDesigner S4M-300dpi ZPL</div>
  <svg style="left:1072px;top:874px" width="6" height="6" viewBox="0 0 6 6"><path d="M1 1L5 5M5 1L1 5" stroke="#333" stroke-width="1.3"/></svg>
</div>
<div class="a" id="topline"></div>

<!-- dialog -->
<div class="a" style="left:639px;top:299px;width:640px;height:478px;background:#f0f0f0;border:1px solid #595959;box-shadow:0 4px 14px 3px rgba(0,0,0,0.35)">
</div>
<div class="a" style="left:640px;top:300px;width:618px;height:106px;background:#fff"></div>
<div class="t" style="left:642.99px;top:308.00px;font-size:15px;color:#000;transform:scaleX(1.0105);transform-origin:0 0">Creazione guidata del testo</div>
<svg style="left:1167px;top:308px" width="9" height="14" viewBox="0 0 9 14"><path d="M1.5 3Q2.3 1 4.3 1Q7 1 7 3.6Q7 5.2 5.3 6.6Q3.8 7.8 3.8 9.8" fill="none" stroke="#000" stroke-width="1.1"/><circle cx="3.8" cy="12" r="0.85" fill="#000"/></svg>
<svg style="left:1222px;top:310px" width="13" height="13" viewBox="0 0 13 13"><path d="M0.5 0.5L12.5 12.5M12.5 0.5L0.5 12.5" stroke="#000" stroke-width="1.1"/></svg>
<div class="t" style="left:664.80px;top:345.00px;font-size:15px;font-weight:bold;color:#000;transform:scaleX(0.9990);transform-origin:0 0">Oggetto testo</div>
<div class="t" style="left:690.01px;top:370.00px;font-size:15px;color:#000;transform:scaleX(0.8869);transform-origin:0 0">Definisci i contenuti e lo stile del testo.</div>
<svg style="left:1186px;top:334px" width="70" height="70" viewBox="0 0 70 70">
  <defs>
    <filter id="hblur" x="-0.2" y="-0.2" width="1.4" height="1.4"><feGaussianBlur stdDeviation="0.9"/></filter>
    <linearGradient id="hhand" x1="0" y1="0" x2="1" y2="1"><stop offset="0" stop-color="#7a4020"/><stop offset="0.45" stop-color="#c07a44"/><stop offset="1" stop-color="#e6b286"/></linearGradient>
    <linearGradient id="vl" x1="0" x2="1"><stop offset="0" stop-color="#fff"/><stop offset="1" stop-color="#fff" stop-opacity="0"/></linearGradient>
    <linearGradient id="vr" x1="1" x2="0"><stop offset="0" stop-color="#fff"/><stop offset="1" stop-color="#fff" stop-opacity="0"/></linearGradient>
    <linearGradient id="vt" x1="0" y1="0" x2="0" y2="1"><stop offset="0" stop-color="#fff"/><stop offset="1" stop-color="#fff" stop-opacity="0"/></linearGradient>
    <linearGradient id="vb" x1="0" y1="1" x2="0" y2="0"><stop offset="0" stop-color="#fff"/><stop offset="1" stop-color="#fff" stop-opacity="0"/></linearGradient>
  </defs>
  <g filter="url(#hblur)">
    <rect x="5" y="5" width="60" height="60" fill="#efe0c8"/>
    <path d="M5 5H36V30L5 60Z" fill="#f7a352"/>
    <path d="M30 14Q42 8 56 12Q62 22 58 36Q54 48 44 50L34 47Q28 30 30 14Z" fill="url(#hhand)"/>
    <path d="M44 12Q54 10 60 18L58 30Q52 22 44 20Z" fill="#6a3a20" opacity="0.6"/>
    <path d="M40 26Q46 22 52 27Q50 34 46 38Q42 34 40 26Z" fill="#d89a66"/>
    <path d="M36 38Q42 36 48 42Q44 47 38 46Z" fill="#e8b58a"/>
    <path d="M30 14Q34 12 38 15L37 38Q34 45 32 50L28.5 51Q27 34 30 14Z" fill="#5a2a12"/>
    <path d="M27.5 52L30.5 43.5L34 45.5Z" fill="#b07a30"/>
    <path d="M34 49Q46 44 58 46L56 54Q44 57 34 53Z" fill="#f8efe4"/>
    <path d="M12 58L36 48M18 62L46 52M28 64L54 56" stroke="#d6c4aa" stroke-width="0.6"/>
  </g>
  <rect x="0" y="0" width="13" height="70" fill="url(#vl)"/>
  <rect x="57" y="0" width="13" height="70" fill="url(#vr)"/>
  <rect x="0" y="0" width="70" height="12" fill="url(#vt)"/>
  <rect x="0" y="58" width="70" height="12" fill="url(#vb)"/>
</svg>
<div class="a" style="left:640px;top:406px;width:618px;height:370px;background:#f0f0f0"></div>
<!-- Contenuto group -->
<div class="a" style="left:693px;top:437px;width:513px;height:163px;border:1px solid #dcdcdc"></div>
<div class="a" style="left:702px;top:430px;width:64px;height:14px;background:#f0f0f0"></div>
<div class="t" style="left:703.71px;top:430.00px;font-size:15px;color:#000;transform:scaleX(0.8882);transform-origin:0 0">Contenuto</div>
<svg style="left:715px;top:456px" width="16" height="16" viewBox="0 0 16 16"><circle cx="8" cy="8" r="7" fill="#fff" stroke="#333" stroke-width="1"/><circle cx="8" cy="8" r="4" fill="#333"/></svg>
<div class="t" style="left:734.72px;top:456.30px;font-size:15px;color:#000;transform:scaleX(0.8806);transform-origin:0 0">Contenuto fisso</div>
<svg style="left:958px;top:456px" width="16" height="16" viewBox="0 0 16 16"><circle cx="8" cy="8" r="7" fill="#fff" stroke="#333" stroke-width="1"/></svg>
<div class="t" style="left:980.00px;top:456.30px;font-size:15px;color:#000;transform:scaleX(0.9105);transform-origin:0 0">Testo variabile</div>
<div class="a" style="left:715px;top:482px;width:469px;height:101px;border:1px solid #4a90d9;background:#f0f0f0"></div>
<div class="a" style="left:717px;top:484px;width:466px;height:98px;border-top:2px solid #8e8e8e;border-left:1.5px solid #a4a4a4"></div>
<div class="a" style="left:719px;top:486px;width:441px;height:73px;background:#fff"></div>
<div class="t" style="left:727px;top:489.5px;font-size:25.3px;font-weight:bold;color:#000;transform:scaleX(0.98);transform-origin:0 0">testo fisso di prova</div>
<div class="a" style="left:956px;top:489px;width:1px;height:26px;background:#000"></div>
<svg style="left:1165px;top:494px" width="10" height="7" viewBox="0 0 10 7"><path d="M1 5.5L5 1.5L9 5.5" fill="none" stroke="#c0c0c0" stroke-width="1.6"/></svg>
<svg style="left:1165px;top:545px" width="10" height="7" viewBox="0 0 10 7"><path d="M1 1.5L5 5.5L9 1.5" fill="none" stroke="#c0c0c0" stroke-width="1.6"/></svg>
<svg style="left:724px;top:565px" width="7" height="10" viewBox="0 0 7 10"><path d="M5.5 1L1.5 5L5.5 9" fill="none" stroke="#c0c0c0" stroke-width="1.6"/></svg>
<svg style="left:1145px;top:565px" width="7" height="10" viewBox="0 0 7 10"><path d="M1.5 1L5.5 5L1.5 9" fill="none" stroke="#c0c0c0" stroke-width="1.6"/></svg>
<!-- Carattere group -->
<div class="a" style="left:693px;top:614px;width:513px;height:81px;border:1px solid #dcdcdc"></div>
<div class="a" style="left:702px;top:607px;width:58px;height:14px;background:#f0f0f0"></div>
<div class="t" style="left:703.73px;top:606.40px;font-size:15px;color:#000;transform:scaleX(0.8738);transform-origin:0 0">Carattere</div>
<div class="a" style="left:715px;top:633px;width:366px;height:25px;background:#f0f0f0;border-top:2px solid #8c8c8c;border-left:2px solid #8c8c8c;border-right:1px solid #9a9a9a;border-bottom:1px solid #9a9a9a;box-shadow:inset -1px -1px 0 #fff"></div>
<div class="t" style="left:719.50px;top:637.40px;font-size:15px;color:#000;transform:scaleX(0.9142);transform-origin:0 0">ZEBRA 0 10.0 Pt</div>
<div class="a" style="left:1091px;top:634px;width:92px;height:27px;background:#e1e1e1;border:1px solid #adadad"></div>
<div class="t" style="left:1102.11px;top:639.90px;font-size:15px;color:#000;transform:scaleX(0.8921);transform-origin:0 0">Seleziona...</div>
<div class="a" style="left:716px;top:667px;width:15px;height:15px;background:#fff;border:1px solid #333"></div>
<div class="t" style="left:734.69px;top:667.60px;font-size:15px;color:#000;transform:scaleX(0.9125);transform-origin:0 0">Inverso</div>
<!-- footer -->
<div class="a" style="left:642px;top:719px;width:616px;height:1px;background:#a0a0a0"></div>
<div class="a" style="left:642px;top:720px;width:616px;height:1px;background:#fff"></div>
<div class="a" style="left:651px;top:739px;width:92px;height:27px;background:#e1e1e1;border:1px solid #adadad"></div>
<div class="t" style="left:678.81px;top:745.10px;font-size:15px;color:#000;transform:scaleX(0.8923);transform-origin:0 0">Guida</div>
<div class="a" style="left:866px;top:739px;width:92px;height:27px;background:#e1e1e1;border:1px solid #adadad"></div>
<div class="t" style="left:889.90px;top:745.10px;font-size:15px;color:#000;transform:scaleX(0.8840);transform-origin:0 0">Annulla</div>
<div class="a" style="left:964px;top:739px;width:91px;height:27px;background:#cccccc;border:1px solid #bfbfbf"></div>
<div class="t" style="left:980.90px;top:745.10px;font-size:15px;color:#838383;color:#838383;transform:scaleX(0.8984);transform-origin:0 0">&lt; Indietro</div>
<div class="a" style="left:1062px;top:739px;width:91px;height:27px;background:#cccccc;border:1px solid #bfbfbf"></div>
<div class="t" style="left:1083.00px;top:745.10px;font-size:15px;color:#838383;color:#838383;transform:scaleX(0.8981);transform-origin:0 0">Avanti &gt;</div>
<div class="a" style="left:1159px;top:739px;width:92px;height:27px;background:#e1e1e1;border:1px solid #adadad"></div>
<div class="t" style="left:1191.42px;top:745.10px;font-size:15px;color:#000;transform:scaleX(0.8821);transform-origin:0 0">Fine</div>
</body></html>
